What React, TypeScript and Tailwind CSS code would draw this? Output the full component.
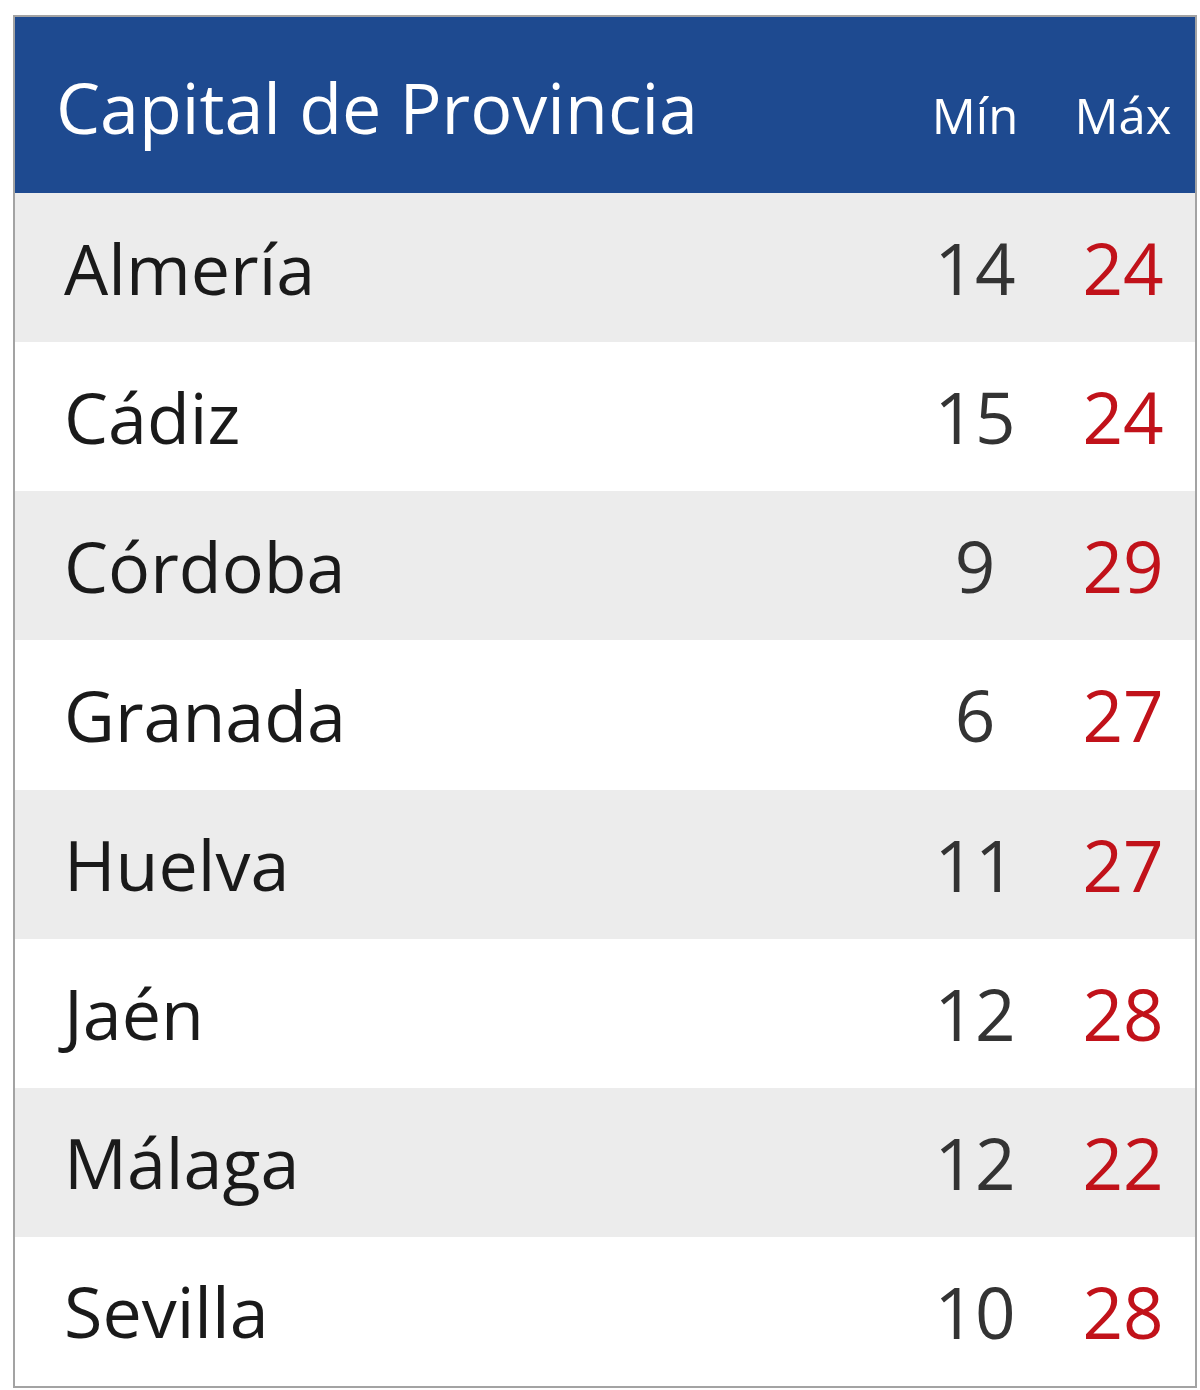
const rows = [
  { city: 'Almería', min: 14, max: 24 },
  { city: 'Cádiz', min: 15, max: 24 },
  { city: 'Córdoba', min: 9, max: 29 },
  { city: 'Granada', min: 6, max: 27 },
  { city: 'Huelva', min: 11, max: 27 },
  { city: 'Jaén', min: 12, max: 28 },
  { city: 'Málaga', min: 12, max: 22 },
  { city: 'Sevilla', min: 10, max: 28 },
]

export default function App() {
  return (
    <div className="min-h-[1390px] bg-white pl-[13px] pt-[15px]" style={{ fontFamily: '"Open Sans", "Liberation Sans", sans-serif' }}>
      <div className="flex h-[1373px] w-[1184px] flex-col border-2 border-[#a3a3a3]">
        <div className="flex h-[176px] shrink-0 items-center bg-[#1e4a90] pt-[4px] text-white">
          <div className="flex w-full items-baseline">
            <div className="flex-1 pl-[41px] text-[70px] leading-none">Capital de Provincia</div>
            <div className="w-[152px] text-center text-[49px] leading-none">Mín</div>
            <div className="w-[144px] text-center text-[49px] leading-none">Máx</div>
          </div>
        </div>
        {rows.map((r, i) => (
          <div key={r.city} className={`flex flex-1 items-center ${i % 2 === 0 ? 'bg-[#ececec]' : 'bg-white'}`}>
            <div className="flex-1 pl-[49px] text-[70px] leading-none text-[#1a1a1a]">{r.city}</div>
            <div className="w-[152px] text-center text-[71px] leading-none text-[#333333]">{r.min}</div>
            <div className="w-[144px] text-center text-[71px] leading-none text-[#c1121a]">{r.max}</div>
          </div>
        ))}
      </div>
    </div>
  )
}
